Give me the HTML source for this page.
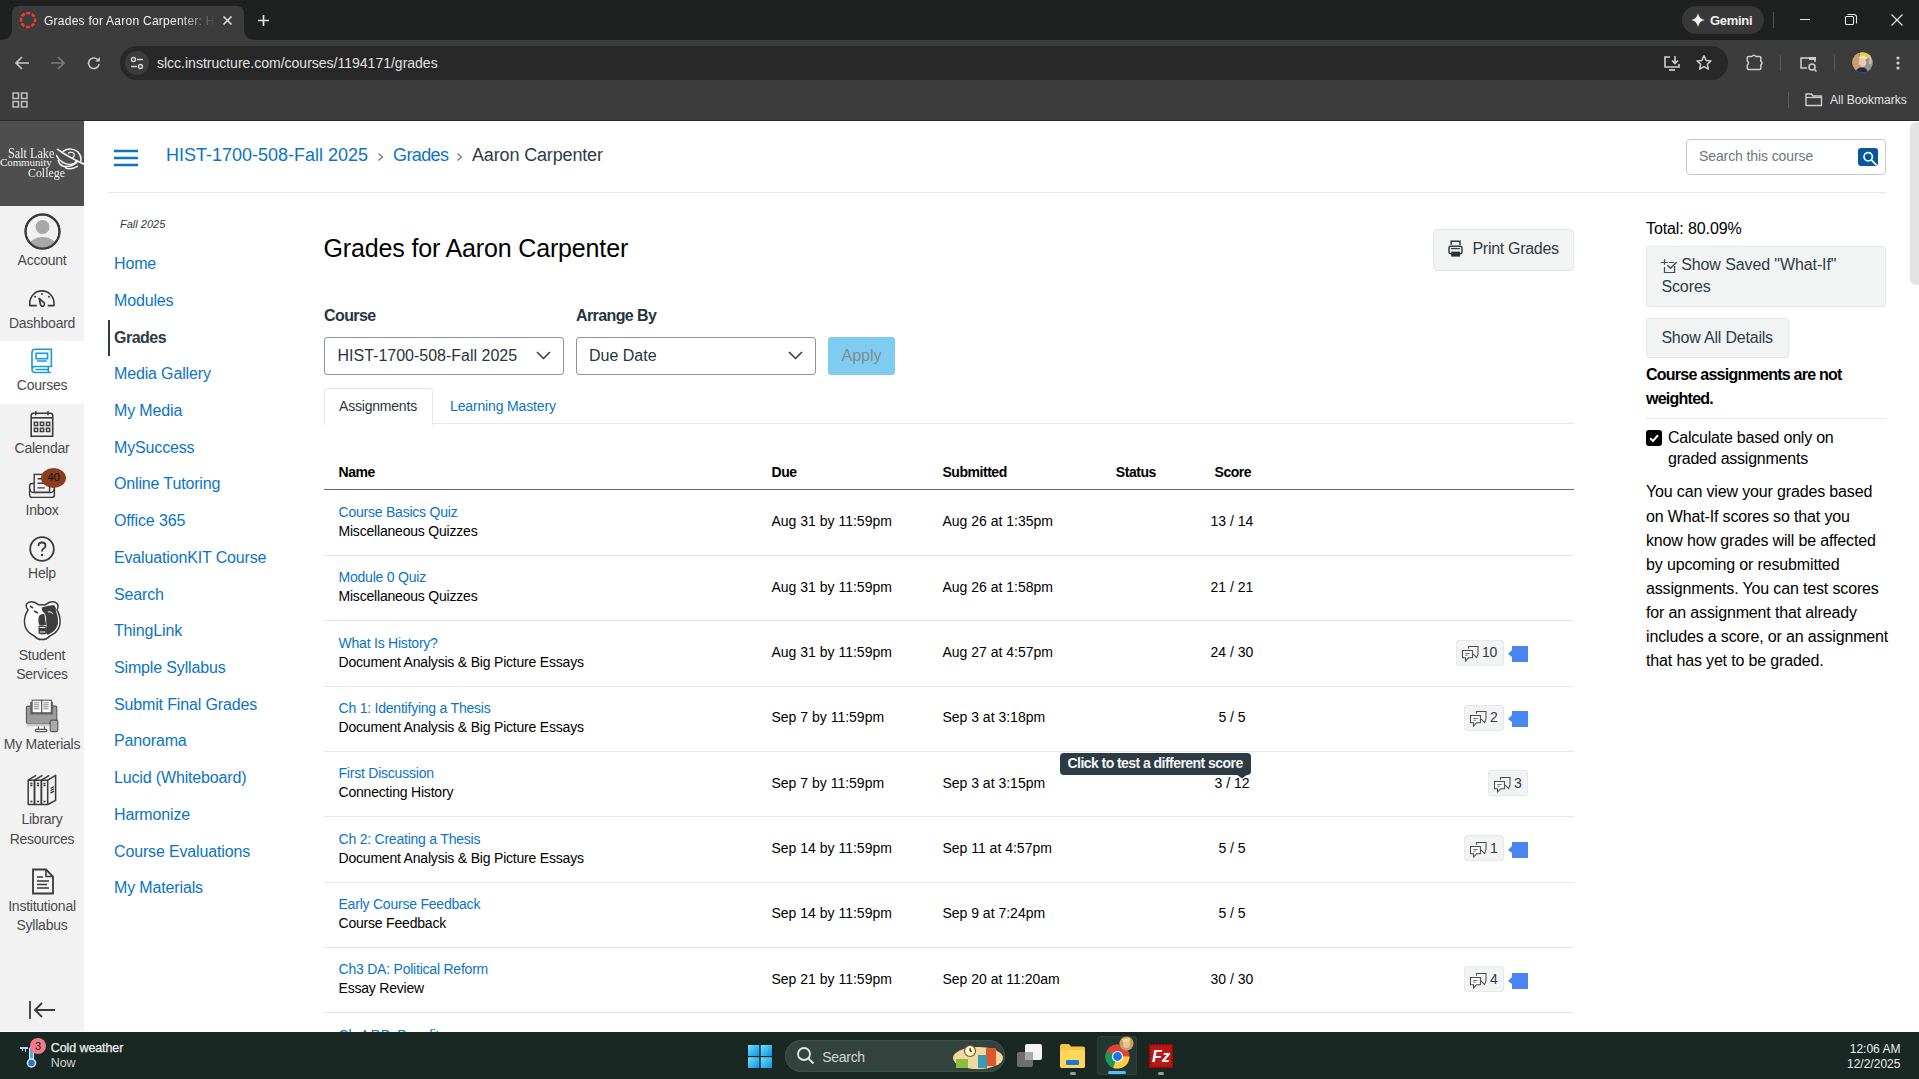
<!DOCTYPE html>
<html><head><meta charset="utf-8"><title>Grades</title>
<style>
html,body{margin:0;padding:0;}
body{width:1919px;height:1079px;overflow:hidden;position:relative;background:#fff;font-family:"Liberation Sans", sans-serif;}
.t{position:absolute;white-space:nowrap;}
.r{position:absolute;}
</style></head><body>
<div class="r" style="left:0px;top:0px;width:1919px;height:40px;background:#1f2121;"></div>
<div class="r" style="left:0px;top:40px;width:1919px;height:81px;background:#3c3c3c;"></div>
<svg class="r" style="left:0px;top:0px;" width="260" height="40" viewBox="0 0 260 40"><path d="M0 40 Q12 40 12 28 L12 14 Q12 6 20 6 L236 6 Q244 6 244 14 L244 28 Q244 40 256 40 Z" fill="#3c3c3c"/></svg>
<svg class="r" style="left:19px;top:11px;" width="18" height="18" viewBox="0 0 18 18"><circle cx="9" cy="9" r="7" fill="none" stroke="#f23d2e" stroke-width="2.6" stroke-dasharray="3.9 1.6" stroke-dashoffset="1.95"/></svg>
<div class="t" style="left:44px;top:14.34px;font-size:12px;line-height:15px;color:#f2f2f2;letter-spacing:0.25px;width:172px;overflow:hidden;-webkit-mask-image:linear-gradient(90deg,#000 78%,transparent);">Grades for Aaron Carpenter: HIS</div>
<svg class="r" style="left:222px;top:15px;" width="11" height="11" viewBox="0 0 11 11"><path d="M1.5 1.5 L9.5 9.5 M9.5 1.5 L1.5 9.5" stroke="#e3e3e3" stroke-width="1.6"/></svg>
<svg class="r" style="left:257px;top:14px;" width="13" height="13" viewBox="0 0 13 13"><path d="M6.5 1 V12 M1 6.5 H12" stroke="#e3e3e3" stroke-width="1.7"/></svg>
<div class="r" style="left:1682px;top:6px;width:82px;height:28px;background:#383838;border-radius:14px;"></div>
<svg class="r" style="left:1691px;top:13px;" width="14" height="14" viewBox="0 0 14 14"><path d="M7 0 Q8 6 14 7 Q8 8 7 14 Q6 8 0 7 Q6 6 7 0Z" fill="#f0f0f0"/></svg>
<div class="t" style="left:1710px;top:12.50px;font-size:13px;line-height:16px;color:#f0f0f0;font-weight:700;letter-spacing:-0.3px;">Gemini</div>
<div class="r" style="left:1773px;top:12px;width:1px;height:16px;background:#555;"></div>
<div class="r" style="left:1800px;top:19px;width:10px;height:1px;background:#e8e8e8;"></div>
<svg class="r" style="left:1845px;top:14px;" width="12" height="12" viewBox="0 0 12 12"><rect x="0.5" y="2.5" width="8" height="8" fill="none" stroke="#e8e8e8" stroke-width="1.1" rx="1"/><path d="M2.5 0.5 H9 Q11.5 0.5 11.5 3 V9.5" fill="none" stroke="#e8e8e8" stroke-width="1.1"/></svg>
<svg class="r" style="left:1891px;top:14px;" width="12" height="12" viewBox="0 0 12 12"><path d="M0.5 0.5 L11.5 11.5 M11.5 0.5 L0.5 11.5" stroke="#e8e8e8" stroke-width="1.2"/></svg>
<svg class="r" style="left:14px;top:55px;" width="16" height="16" viewBox="0 0 16 16"><path d="M15 8 H2 M8 2 L2 8 L8 14" fill="none" stroke="#c8c8c8" stroke-width="1.7"/></svg>
<svg class="r" style="left:50px;top:55px;" width="16" height="16" viewBox="0 0 16 16"><path d="M1 8 H14 M8 2 L14 8 L8 14" fill="none" stroke="#7a7a7a" stroke-width="1.7"/></svg>
<svg class="r" style="left:86px;top:54px;" width="16" height="16" viewBox="0 0 16 16"><path d="M13.1 10 A5.3 5.3 0 1 1 11.4 5.3" fill="none" stroke="#c8c8c8" stroke-width="1.6"/><path d="M9.2 7.4 H13.9 V2.9 Z" fill="#c8c8c8"/></svg>
<div class="r" style="left:120px;top:46px;width:1608px;height:34px;background:#282828;border-radius:17px;"></div>
<div class="r" style="left:125px;top:51px;width:24px;height:24px;background:#3c3c3c;border-radius:12px;"></div>
<svg class="r" style="left:129px;top:55px;" width="16" height="16" viewBox="0 0 16 16"><circle cx="4.5" cy="4.5" r="2" fill="none" stroke="#d8d8d8" stroke-width="1.4"/><path d="M8 4.5 H14" stroke="#d8d8d8" stroke-width="1.4"/><circle cx="11.5" cy="11.5" r="2" fill="none" stroke="#d8d8d8" stroke-width="1.4"/><path d="M2 11.5 H8" stroke="#d8d8d8" stroke-width="1.4"/></svg>
<div class="t" style="left:157px;top:54.15px;font-size:14px;line-height:18px;color:#e3e3e3;">slcc.instructure.com/courses/1194171/grades</div>
<svg class="r" style="left:1663px;top:55px;" width="19" height="17" viewBox="0 0 19 17"><path d="M7 2 H2 V12 H16 V9" fill="none" stroke="#cfcfcf" stroke-width="1.6"/><path d="M12 1 V8 M9 5.5 L12 8.5 L15 5.5" fill="none" stroke="#cfcfcf" stroke-width="1.6"/><path d="M6 15 H12" stroke="#cfcfcf" stroke-width="1.8"/></svg>
<svg class="r" style="left:1695px;top:54px;" width="18" height="18" viewBox="0 0 18 18"><path d="M9 1.8 L11.1 6.4 L16 6.9 L12.3 10.2 L13.4 15.2 L9 12.6 L4.6 15.2 L5.7 10.2 L2 6.9 L6.9 6.4 Z" fill="none" stroke="#cfcfcf" stroke-width="1.5" stroke-linejoin="round"/></svg>
<svg class="r" style="left:1745px;top:53px;" width="20" height="20" viewBox="0 0 20 20"><path d="M3.5 3.4 H6.9 Q8.9 0.9 10.9 3.4 H14.6 Q15.8 3.4 15.8 4.6 V8.2 Q18.3 10 15.8 11.8 V15.3 Q15.8 16.5 14.6 16.5 H3.5 Q2.3 16.5 2.3 15.3 V12 Q4.8 10 2.3 8 V4.6 Q2.3 3.4 3.5 3.4 Z" fill="none" stroke="#cfcfcf" stroke-width="1.5" stroke-linejoin="round"/></svg>
<div class="r" style="left:1780px;top:55px;width:1px;height:16px;background:#5a5a5a;"></div>
<svg class="r" style="left:1799px;top:55px;" width="20" height="18" viewBox="0 0 20 18"><path d="M8 13 H2 V3 H16 V7" fill="none" stroke="#cfcfcf" stroke-width="1.5"/><rect x="10" y="2" width="7" height="3" fill="#cfcfcf"/><circle cx="13" cy="12" r="3" fill="none" stroke="#cfcfcf" stroke-width="1.5"/><path d="M15 14 L17.5 16.5" stroke="#cfcfcf" stroke-width="1.6"/></svg>
<div class="r" style="left:1834px;top:55px;width:1px;height:16px;background:#5a5a5a;"></div>
<svg class="r" style="left:1852px;top:52px;" width="21" height="21" viewBox="0 0 21 21"><defs><clipPath id="av"><circle cx="10.5" cy="10.5" r="10.2"/></clipPath></defs><g clip-path="url(#av)"><rect width="21" height="21" fill="#b08a5a"/><rect x="0" y="0" width="7" height="21" fill="#c9a070"/><rect x="15" y="9" width="6" height="12" fill="#8a9aa0"/><path d="M8 0 L18 0 L18.5 6 L8 7 Z" fill="#e8d040"/><path d="M7 5 Q11 3.5 15 5.5 L14.5 7 L7.5 7 Z" fill="#f0eee0"/><ellipse cx="10.5" cy="10.5" rx="3.8" ry="4.6" fill="#e6c8b8"/><path d="M3 21 Q4 15.5 10.5 15.5 Q15 15.5 16 21 Z" fill="#1c2a55"/><path d="M16.5 3 Q19.5 6 18 12" stroke="#d8c8b0" stroke-width="2" fill="none"/></g></svg>
<svg class="r" style="left:1896px;top:56px;" width="4" height="14" viewBox="0 0 4 14"><circle cx="2" cy="2" r="1.6" fill="#d0d0d0"/><circle cx="2" cy="7" r="1.6" fill="#d0d0d0"/><circle cx="2" cy="12" r="1.6" fill="#d0d0d0"/></svg>
<svg class="r" style="left:12px;top:92px;" width="16" height="16" viewBox="0 0 16 16"><rect x="1" y="1" width="5.5" height="5.5" fill="none" stroke="#c8c8c8" stroke-width="1.4"/><rect x="9.5" y="1" width="5.5" height="5.5" fill="none" stroke="#c8c8c8" stroke-width="1.4"/><rect x="1" y="9.5" width="5.5" height="5.5" fill="none" stroke="#c8c8c8" stroke-width="1.4"/><rect x="9.5" y="9.5" width="5.5" height="5.5" fill="none" stroke="#c8c8c8" stroke-width="1.4"/></svg>
<div class="r" style="left:1788px;top:92px;width:1px;height:16px;background:#5a5a5a;"></div>
<svg class="r" style="left:1805px;top:93px;" width="18" height="14" viewBox="0 0 18 14"><path d="M1 1 H6.5 L8 3 H16.5 V12.5 H1 Z" fill="none" stroke="#cfcfcf" stroke-width="1.4" stroke-linejoin="round"/><path d="M1 4.5 H16.5" stroke="#cfcfcf" stroke-width="1.2"/></svg>
<div class="t" style="left:1830px;top:93.34px;font-size:12px;line-height:15px;color:#e3e3e3;">All Bookmarks</div>
<div class="r" style="left:0px;top:120px;width:1919px;height:1px;background:#2a2a2a;"></div>
<div class="r" style="left:0px;top:121px;width:84px;height:910px;background:#f2f2f2;"></div>
<div class="r" style="left:0px;top:121px;width:84px;height:85px;background:#4e4e4e;"></div>
<div class="r" style="left:0px;top:341px;width:84px;height:63px;background:#ffffff;"></div>
<div class="t" style="left:8px;top:143.78px;font-size:14.5px;line-height:18px;color:#f4f4f4;font-family:'Liberation Serif', serif;"><span style="display:inline-block;transform:scaleX(0.84);transform-origin:0 0">Salt Lake</span></div>
<div class="t" style="left:0px;top:154.99px;font-size:11px;line-height:14px;color:#f4f4f4;letter-spacing:-0.1px;font-family:'Liberation Serif', serif;"><span style="display:inline-block;transform:scaleX(1.0);transform-origin:0 0">Community</span></div>
<div class="t" style="left:27.5px;top:163.62px;font-size:13.5px;line-height:17px;color:#f4f4f4;font-family:'Liberation Serif', serif;"><span style="display:inline-block;transform:scaleX(0.88);transform-origin:0 0">College</span></div>
<svg class="r" style="left:56px;top:147px;" width="28" height="24" viewBox="0 0 28 24"><g fill="none" stroke="#f4f4f4" stroke-linecap="round"><path d="M7 4.3 Q14 -0.5 21.5 4.5 Q26 9 24.7 14" stroke-width="1.5"/><path d="M1.7 2.4 Q12 10 27.5 16.9" stroke-width="1.8"/><path d="M0.5 8.5 Q5 17 14.4 17.5 Q19 17 21 14" stroke-width="1.5"/><path d="M2.2 13.5 Q4 19.5 10 19.5 Q16 19.5 20.9 15.5" stroke-width="1.5"/><path d="M9.2 20.7 Q14 23.5 21.4 19.3" stroke-width="1.5"/><path d="M12.5 6 Q15 4 18 6.5 Q19 9 16.5 11" stroke-width="1.2"/></g></svg>
<svg class="r" style="left:24px;top:213px;" width="37" height="37" viewBox="0 0 37 37"><defs><clipPath id="ac"><circle cx="18.5" cy="18.5" r="16.5"/></clipPath></defs><circle cx="18.5" cy="18.5" r="17" fill="#f1f1f1" stroke="#3a3a3a" stroke-width="2"/><g clip-path="url(#ac)"><circle cx="18.5" cy="14" r="7" fill="#a8a8a8"/><ellipse cx="18.5" cy="34" rx="14" ry="10" fill="#a8a8a8"/></g><circle cx="18.5" cy="18.5" r="17" fill="none" stroke="#3a3a3a" stroke-width="2"/></svg>
<div class="t" style="left:-258px;width:600px;text-align:center;top:251.15px;font-size:14px;line-height:18px;color:#4a4a4a;letter-spacing:-0.25px;">Account</div>
<svg class="r" style="left:28px;top:288px;" width="28" height="20" viewBox="0 0 28 20"><g fill="none" stroke="#3a3a3a" stroke-width="1.6" stroke-linejoin="round"><path d="M8.8 17.6 H1.8 V15 A12.1 12.1 0 0 1 26 15 V17.6 H19.7"/><path d="M11.1 10.3 L12.7 17.2 Q13.6 18.8 15.3 18.3 Q17 17.3 16.4 15.2 Z"/></g><circle cx="14" cy="5.9" r="1" fill="#3a3a3a"/><circle cx="7.1" cy="8.7" r="1" fill="#3a3a3a"/><circle cx="21" cy="8.7" r="1" fill="#3a3a3a"/></svg>
<div class="t" style="left:-258px;width:600px;text-align:center;top:314.15px;font-size:14px;line-height:18px;color:#4a4a4a;letter-spacing:-0.25px;">Dashboard</div>
<svg class="r" style="left:31px;top:348px;" width="22" height="26" viewBox="0 0 22 26"><g fill="none" stroke="#1a9ad6" stroke-width="1.6"><path d="M1 20 V4.5 Q1 1.2 4.3 1.2 H20.4 V18.5 H4 Q1 18.5 1 21.5 Q1 24.5 4.5 24.5 H19.8"/><path d="M17.3 18.5 V24.5"/><rect x="5.1" y="5.3" width="11.5" height="5.4"/><path d="M6.1 13 H15.7 M4.5 21.5 H17.3"/></g></svg>
<div class="t" style="left:-258px;width:600px;text-align:center;top:376.15px;font-size:14px;line-height:18px;color:#4a4a4a;letter-spacing:-0.25px;">Courses</div>
<svg class="r" style="left:29px;top:410px;" width="26" height="28" viewBox="0 0 26 28"><g fill="none" stroke="#3a3a3a" stroke-width="1.6"><path d="M2.2 26.2 V5.5 Q2.2 3.2 4.5 3.2 H21.4 Q23.7 3.2 23.7 5.5 V26.2 Z"/><path d="M2.2 7.8 H23.7"/><path d="M6.8 1.3 V5.2 M19 1.3 V5.2"/></g><g fill="#cfcfcf" stroke="#3a3a3a" stroke-width="1.3"><rect x="5.3" y="12.2" width="3.4" height="3.4"/><rect x="11.3" y="12.2" width="3.4" height="3.4"/><rect x="17.4" y="12.2" width="3.4" height="3.4"/><rect x="5.3" y="18.2" width="3.4" height="3.4"/><rect x="11.3" y="18.2" width="3.4" height="3.4"/><rect x="17.4" y="18.2" width="3.4" height="3.4"/></g></svg>
<div class="t" style="left:-258px;width:600px;text-align:center;top:439.15px;font-size:14px;line-height:18px;color:#4a4a4a;letter-spacing:-0.25px;">Calendar</div>
<svg class="r" style="left:28px;top:472px;" width="28" height="27" viewBox="0 0 28 27"><g fill="none" stroke="#3a3a3a" stroke-width="1.4"><rect x="1.6" y="11.5" width="24.8" height="13.9" rx="2.5"/><path d="M1.6 16.5 Q2.3 20.6 6 20.6 H22 Q25.7 20.6 26.4 16.5"/></g><rect x="6.2" y="2.4" width="15.4" height="17.8" fill="#f1f1f1" stroke="#3a3a3a" stroke-width="1.4"/><path d="M9.6 6.8 H16.6 M9.6 11.3 H16.6 M9.6 15.9 H16.6" stroke="#3a3a3a" stroke-width="1.4"/></svg>
<div class="r" style="left:41px;top:468px;width:25px;height:20px;background:#8a3e1e;border-radius:50%;"></div>
<div class="t" style="left:-246.3px;width:600px;text-align:center;top:470.19px;font-size:11px;line-height:14px;color:#111;">40</div>
<div class="t" style="left:-258px;width:600px;text-align:center;top:501.15px;font-size:14px;line-height:18px;color:#4a4a4a;letter-spacing:-0.25px;">Inbox</div>
<svg class="r" style="left:29px;top:536px;" width="26" height="26" viewBox="0 0 26 26"><circle cx="13" cy="13" r="11.8" fill="none" stroke="#3a3a3a" stroke-width="1.8"/><path d="M9.5 10 Q9.5 6.5 13 6.5 Q16.5 6.5 16.5 9.7 Q16.5 11.8 13.8 13.2 Q13 13.7 13 15.5" fill="none" stroke="#3a3a3a" stroke-width="1.8"/><circle cx="13" cy="19" r="1.2" fill="#3a3a3a"/></svg>
<div class="t" style="left:-258px;width:600px;text-align:center;top:564.15px;font-size:14px;line-height:18px;color:#4a4a4a;letter-spacing:-0.25px;">Help</div>
<svg class="r" style="left:20px;top:598px;" width="44" height="46" viewBox="0 0 44 46"><path d="M8 12 Q5 8 7 5.5 Q10 2.5 15 4.5 L19 7 Q22 6.3 25 7 L29 4.5 Q34 2.5 37 5.5 Q39 8 37 12 Q40.5 18 40 25 Q39.5 31 35 35 L29 38.5 Q27 41.5 22 41.5 Q17 41.5 15 38.5 L9.5 35 Q5 31 4.5 25 Q4 18 8 12 Z" fill="#fbfbfb" stroke="#3a3a3a" stroke-width="1.5"/><path d="M21.5 9.5 Q27 7.5 33.5 7 Q36.5 8.5 35.8 12.5 Q38.5 18.5 38 25.5 Q37 31 32 34.5 L27.5 37 Q25.5 33 26.5 28 L26 19 Q25 14.5 22.5 13.5 Z" fill="#3d3d3d"/><path d="M19 18 Q21.5 15 24.5 16.5 L26 27 L19.5 27.5 Q17.5 22.5 19 18 Z" fill="#3d3d3d"/><path d="M18.5 28 Q22.5 27 26.5 28.5 L27 35.5 Q22.5 37.5 18.5 35.5 Z" fill="#3d3d3d"/><path d="M19.5 29.5 H25.5 M19.8 34 H25.3" stroke="#fff" stroke-width="1.2"/><path d="M14 13 L18 15 M10 8 L13 10" stroke="#3d3d3d" stroke-width="1.6"/><path d="M28 14 Q31 13 33 16" stroke="#fff" stroke-width="1.1" fill="none"/></svg>
<div class="t" style="left:-258px;width:600px;text-align:center;top:646.15px;font-size:14px;line-height:18px;color:#4a4a4a;letter-spacing:-0.25px;">Student</div>
<div class="t" style="left:-258px;width:600px;text-align:center;top:665.15px;font-size:14px;line-height:18px;color:#4a4a4a;letter-spacing:-0.25px;">Services</div>
<svg class="r" style="left:24px;top:698px;" width="36" height="36" viewBox="0 0 36 36"><rect x="2.4" y="8.1" width="30.4" height="17.5" rx="1.5" fill="#9c9c9c" stroke="#555" stroke-width="1.1"/><rect x="3" y="25.6" width="22" height="2.6" fill="#c8c8c8"/><path d="M14.5 28.3 V31.4 M20.4 28.3 V31.4" stroke="#555" stroke-width="1.1"/><rect x="11.2" y="31.4" width="11.7" height="2.2" rx="1" fill="#f1f1f1" stroke="#555" stroke-width="1.1"/><path d="M6.1 4 H29.1 V16.6 H6.1Z" fill="#6a6a6a"/><rect x="8.1" y="2.2" width="9.6" height="12.6" fill="#fff" stroke="#555" stroke-width="1.1"/><rect x="17.7" y="2.2" width="9.6" height="12.6" fill="#fff" stroke="#555" stroke-width="1.1"/><path d="M9.8 4.8 H15.3 M9.8 6.8 H15.3 M9.8 8.8 H15.3 M9.8 10.8 H15.3 M19.3 4.8 H24.8 M19.3 6.8 H24.8 M19.3 8.8 H24.8 M19.3 10.8 H24.8" stroke="#666" stroke-width="0.8"/><rect x="26.2" y="22.1" width="7.6" height="11.5" rx="1.5" fill="#aaa" stroke="#555" stroke-width="1.1"/></svg>
<div class="t" style="left:-258px;width:600px;text-align:center;top:735.15px;font-size:14px;line-height:18px;color:#4a4a4a;letter-spacing:-0.25px;">My Materials</div>
<svg class="r" style="left:26px;top:773px;" width="32" height="34" viewBox="0 0 32 34"><g fill="none" stroke="#3a3a3a" stroke-width="1.5" stroke-linejoin="round"><rect x="2.2" y="7.2" width="6.3" height="24.3"/><rect x="8.5" y="7.2" width="6.9" height="24.3"/><rect x="15.4" y="7.2" width="6.3" height="24.3"/><path d="M2.2 7.2 L10.1 2.3 M8.5 7.2 L16.4 2.3 M15.4 7.2 L23.3 2.3 M21.7 7.2 L29.6 2.3 V27.3 L21.7 31.5"/><path d="M4.3 10.5 H6.4 M4.3 12.5 H6.4 M4.3 28.5 H6.4 M10.9 10.5 H13.1 M10.9 12.5 H13.1 M10.9 28.5 H13.1 M17.5 10.5 H19.6 M17.5 12.5 H19.6 M17.5 28.5 H19.6 M24.5 15.5 L28 13.5 M24.5 17.8 L28 15.8 M24.5 20.1 L28 18.1" stroke-width="1.3"/></g></svg>
<div class="t" style="left:-258px;width:600px;text-align:center;top:810.15px;font-size:14px;line-height:18px;color:#4a4a4a;letter-spacing:-0.25px;">Library</div>
<div class="t" style="left:-258px;width:600px;text-align:center;top:830.15px;font-size:14px;line-height:18px;color:#4a4a4a;letter-spacing:-0.25px;">Resources</div>
<svg class="r" style="left:31px;top:868px;" width="24" height="27" viewBox="0 0 24 27"><path d="M2 1.5 H15 L22 8.5 V25.5 H2Z" fill="#f6f6f6" stroke="#3a3a3a" stroke-width="1.8"/><path d="M15 1.5 V8.5 H22" fill="none" stroke="#3a3a3a" stroke-width="1.6"/><path d="M6 9 H12 M6 13 H18 M6 16.5 H16 M6 20 H18" stroke="#3a3a3a" stroke-width="1.6"/></svg>
<div class="t" style="left:-258px;width:600px;text-align:center;top:897.15px;font-size:14px;line-height:18px;color:#4a4a4a;letter-spacing:-0.25px;">Institutional</div>
<div class="t" style="left:-258px;width:600px;text-align:center;top:916.15px;font-size:14px;line-height:18px;color:#4a4a4a;letter-spacing:-0.25px;">Syllabus</div>
<svg class="r" style="left:28px;top:1000px;" width="28" height="20" viewBox="0 0 28 20"><path d="M2 1 V19" stroke="#3a3a3a" stroke-width="1.8"/><path d="M27 10 H7 M14 3 L7 10 L14 17" fill="none" stroke="#3a3a3a" stroke-width="1.8"/></svg>
<div class="t" style="left:120px;top:216.69px;font-size:11px;line-height:14px;color:#2d3b45;font-style:italic;">Fall 2025</div>
<div class="t" style="left:114px;top:254.06px;font-size:16px;line-height:20px;color:#0b74c4;letter-spacing:-0.15px;">Home</div>
<div class="t" style="left:114px;top:290.78px;font-size:16px;line-height:20px;color:#0b74c4;letter-spacing:-0.15px;">Modules</div>
<div class="t" style="left:114px;top:327.50px;font-size:16px;line-height:20px;color:#2d3b45;font-weight:700;letter-spacing:-0.5px;">Grades</div>
<div class="t" style="left:114px;top:364.22px;font-size:16px;line-height:20px;color:#0b74c4;letter-spacing:-0.15px;">Media Gallery</div>
<div class="t" style="left:114px;top:400.94px;font-size:16px;line-height:20px;color:#0b74c4;letter-spacing:-0.15px;">My Media</div>
<div class="t" style="left:114px;top:437.66px;font-size:16px;line-height:20px;color:#0b74c4;letter-spacing:-0.15px;">MySuccess</div>
<div class="t" style="left:114px;top:474.38px;font-size:16px;line-height:20px;color:#0b74c4;letter-spacing:-0.15px;">Online Tutoring</div>
<div class="t" style="left:114px;top:511.10px;font-size:16px;line-height:20px;color:#0b74c4;letter-spacing:-0.15px;">Office 365</div>
<div class="t" style="left:114px;top:547.82px;font-size:16px;line-height:20px;color:#0b74c4;letter-spacing:-0.15px;">EvaluationKIT Course</div>
<div class="t" style="left:114px;top:584.54px;font-size:16px;line-height:20px;color:#0b74c4;letter-spacing:-0.15px;">Search</div>
<div class="t" style="left:114px;top:621.26px;font-size:16px;line-height:20px;color:#0b74c4;letter-spacing:-0.15px;">ThingLink</div>
<div class="t" style="left:114px;top:657.98px;font-size:16px;line-height:20px;color:#0b74c4;letter-spacing:-0.15px;">Simple Syllabus</div>
<div class="t" style="left:114px;top:694.70px;font-size:16px;line-height:20px;color:#0b74c4;letter-spacing:-0.15px;">Submit Final Grades</div>
<div class="t" style="left:114px;top:731.42px;font-size:16px;line-height:20px;color:#0b74c4;letter-spacing:-0.15px;">Panorama</div>
<div class="t" style="left:114px;top:768.14px;font-size:16px;line-height:20px;color:#0b74c4;letter-spacing:-0.15px;">Lucid (Whiteboard)</div>
<div class="t" style="left:114px;top:804.86px;font-size:16px;line-height:20px;color:#0b74c4;letter-spacing:-0.15px;">Harmonize</div>
<div class="t" style="left:114px;top:841.58px;font-size:16px;line-height:20px;color:#0b74c4;letter-spacing:-0.15px;">Course Evaluations</div>
<div class="t" style="left:114px;top:878.30px;font-size:16px;line-height:20px;color:#0b74c4;letter-spacing:-0.15px;">My Materials</div>
<div class="r" style="left:108px;top:319.5px;width:2px;height:36.5px;background:#2d3b45;"></div>
<svg class="r" style="left:114px;top:149px;" width="24" height="18" viewBox="0 0 24 18"><path d="M0 2 H24 M0 9 H24 M0 16 H24" stroke="#0b74c4" stroke-width="2.6"/></svg>
<div class="t" style="left:166px;top:143.76px;font-size:18px;line-height:22px;color:#0b74c4;">HIST-1700-508-Fall 2025</div>
<svg class="r" style="left:377px;top:152px;" width="7" height="10" viewBox="0 0 7 10"><path d="M1.5 1.5 L5.5 5 L1.5 8.5" fill="none" stroke="#6b7780" stroke-width="1.2"/></svg>
<div class="t" style="left:393px;top:143.76px;font-size:18px;line-height:22px;color:#0b74c4;letter-spacing:-0.6px;">Grades</div>
<svg class="r" style="left:456px;top:152px;" width="7" height="10" viewBox="0 0 7 10"><path d="M1.5 1.5 L5.5 5 L1.5 8.5" fill="none" stroke="#6b7780" stroke-width="1.2"/></svg>
<div class="t" style="left:472px;top:143.76px;font-size:18px;line-height:22px;color:#2d3b45;letter-spacing:-0.15px;">Aaron Carpenter</div>
<div class="r" style="left:108px;top:192px;width:1778px;height:1px;background:#e4e7e9;"></div>
<div class="r" style="left:1686px;top:139px;width:198px;height:34px;background:#fff;border:1px solid #c9c9c9;border-radius:4px;"></div>
<div class="t" style="left:1699px;top:146.65px;font-size:14px;line-height:18px;color:#6b7780;letter-spacing:-0.1px;">Search this course</div>
<div class="r" style="left:1858px;top:148px;width:20px;height:18px;background:#0756a0;border-radius:3px;overflow:hidden;"></div>
<svg class="r" style="left:1858px;top:148px;" width="20" height="18" viewBox="0 0 20 18"><circle cx="10.2" cy="8.8" r="4.2" fill="none" stroke="#fff" stroke-width="1.7"/><path d="M13 11.7 L18.5 17.2" stroke="#fff" stroke-width="1.8"/></svg>
<div class="r" style="left:1910px;top:122px;width:12px;height:163px;background:#e3e3e3;border-radius:6px;"></div>
<div class="t" style="left:323.5px;top:233.14px;font-size:25px;line-height:31px;color:#000;letter-spacing:-0.15px;">Grades for Aaron Carpenter</div>
<div class="r" style="left:1433px;top:229px;width:139px;height:40px;background:#f2f4f4;border:1px solid #e4e7e9;border-radius:4px;"></div>
<svg class="r" style="left:1447px;top:240px;" width="17" height="18" viewBox="0 0 17 18"><path d="M4.2 5 V1.3 H13 V5" fill="none" stroke="#2d3b45" stroke-width="1.5"/><rect x="2" y="6.2" width="13" height="7.5" rx="1.6" fill="none" stroke="#2d3b45" stroke-width="1.5"/><path d="M4 8.6 H13" stroke="#2d3b45" stroke-width="1.3"/><rect x="4.2" y="11.6" width="8.8" height="5" fill="#263238"/></svg>
<div class="t" style="left:1472.5px;top:239.46px;font-size:16px;line-height:20px;color:#2d3b45;letter-spacing:-0.3px;">Print Grades</div>
<div class="t" style="left:324px;top:305.76px;font-size:16px;line-height:20px;color:#273540;font-weight:700;letter-spacing:-0.6px;">Course</div>
<div class="t" style="left:576px;top:305.76px;font-size:16px;line-height:20px;color:#273540;font-weight:700;letter-spacing:-0.6px;">Arrange By</div>
<div class="r" style="left:324px;top:337px;width:238px;height:36px;background:#fff;border:1px solid #8b969e;border-radius:3px;"></div>
<div class="t" style="left:337.5px;top:345.76px;font-size:16px;line-height:20px;color:#273540;letter-spacing:0px;">HIST-1700-508-Fall 2025</div>
<svg class="r" style="left:536px;top:351px;" width="15" height="9" viewBox="0 0 15 9"><path d="M1 1 L7.5 7.5 L14 1" fill="none" stroke="#2d3b45" stroke-width="1.5"/></svg>
<div class="r" style="left:576px;top:337px;width:238px;height:36px;background:#fff;border:1px solid #8b969e;border-radius:3px;"></div>
<div class="t" style="left:589px;top:345.76px;font-size:16px;line-height:20px;color:#273540;letter-spacing:0px;">Due Date</div>
<svg class="r" style="left:788px;top:351px;" width="15" height="9" viewBox="0 0 15 9"><path d="M1 1 L7.5 7.5 L14 1" fill="none" stroke="#2d3b45" stroke-width="1.5"/></svg>
<div class="r" style="left:828px;top:337px;width:67px;height:38px;background:#7ecdf0;border-radius:3px;"></div>
<div class="t" style="left:561.5px;width:600px;text-align:center;top:345.76px;font-size:16px;line-height:20px;color:#7f8a92;">Apply</div>
<div class="r" style="left:324px;top:423px;width:1250px;height:1px;background:#e4e7e9;"></div>
<div class="r" style="left:324px;top:388px;width:107px;height:36px;background:#fff;border:1px solid #e4e7e9;border-bottom:none;border-radius:3px 3px 0 0;"></div>
<div class="t" style="left:339px;top:396.85px;font-size:14px;line-height:18px;color:#273540;letter-spacing:-0.2px;">Assignments</div>
<div class="t" style="left:450px;top:396.85px;font-size:14px;line-height:18px;color:#0b74c4;letter-spacing:-0.15px;">Learning Mastery</div>
<div class="t" style="left:338.5px;top:463.25px;font-size:14px;line-height:18px;color:#000;font-weight:700;letter-spacing:-0.45px;">Name</div>
<div class="t" style="left:771.5px;top:463.25px;font-size:14px;line-height:18px;color:#000;font-weight:700;letter-spacing:-0.45px;">Due</div>
<div class="t" style="left:942.4px;top:463.25px;font-size:14px;line-height:18px;color:#000;font-weight:700;letter-spacing:-0.45px;">Submitted</div>
<div class="t" style="left:1115.8px;top:463.25px;font-size:14px;line-height:18px;color:#000;font-weight:700;letter-spacing:-0.45px;">Status</div>
<div class="t" style="left:1214.5px;top:463.25px;font-size:14px;line-height:18px;color:#000;font-weight:700;letter-spacing:-0.45px;">Score</div>
<div class="r" style="left:324px;top:489px;width:1250px;height:1px;background:#5f6b74;"></div>
<div class="t" style="left:338.5px;top:503.15px;font-size:14px;line-height:18px;color:#0b74c4;letter-spacing:-0.22px;">Course Basics Quiz</div>
<div class="t" style="left:338.5px;top:522.05px;font-size:14px;line-height:18px;color:#000;letter-spacing:-0.2px;">Miscellaneous Quizzes</div>
<div class="t" style="left:771.5px;top:512.45px;font-size:14px;line-height:18px;color:#000;letter-spacing:0px;">Aug 31 by 11:59pm</div>
<div class="t" style="left:942.4px;top:512.45px;font-size:14px;line-height:18px;color:#000;letter-spacing:0px;">Aug 26 at 1:35pm</div>
<div class="t" style="left:932px;width:600px;text-align:center;top:512.45px;font-size:14px;line-height:18px;color:#000;letter-spacing:0px;">13 / 14</div>
<div class="r" style="left:324px;top:555.0px;width:1250px;height:1px;background:#e4e7e9;"></div>
<div class="t" style="left:338.5px;top:568.45px;font-size:14px;line-height:18px;color:#0b74c4;letter-spacing:-0.22px;">Module 0 Quiz</div>
<div class="t" style="left:338.5px;top:587.35px;font-size:14px;line-height:18px;color:#000;letter-spacing:-0.2px;">Miscellaneous Quizzes</div>
<div class="t" style="left:771.5px;top:577.75px;font-size:14px;line-height:18px;color:#000;letter-spacing:0px;">Aug 31 by 11:59pm</div>
<div class="t" style="left:942.4px;top:577.75px;font-size:14px;line-height:18px;color:#000;letter-spacing:0px;">Aug 26 at 1:58pm</div>
<div class="t" style="left:932px;width:600px;text-align:center;top:577.75px;font-size:14px;line-height:18px;color:#000;letter-spacing:0px;">21 / 21</div>
<div class="r" style="left:324px;top:620.3px;width:1250px;height:1px;background:#e4e7e9;"></div>
<div class="t" style="left:338.5px;top:633.75px;font-size:14px;line-height:18px;color:#0b74c4;letter-spacing:-0.22px;">What Is History?</div>
<div class="t" style="left:338.5px;top:652.65px;font-size:14px;line-height:18px;color:#000;letter-spacing:-0.2px;">Document Analysis &amp; Big Picture Essays</div>
<div class="t" style="left:771.5px;top:643.05px;font-size:14px;line-height:18px;color:#000;letter-spacing:0px;">Aug 31 by 11:59pm</div>
<div class="t" style="left:942.4px;top:643.05px;font-size:14px;line-height:18px;color:#000;letter-spacing:0px;">Aug 27 at 4:57pm</div>
<div class="t" style="left:932px;width:600px;text-align:center;top:643.05px;font-size:14px;line-height:18px;color:#000;letter-spacing:0px;">24 / 30</div>
<div class="r" style="left:324px;top:685.6px;width:1250px;height:1px;background:#e4e7e9;"></div>
<div class="r" style="left:1456px;top:639.5px;width:48px;height:26px;background:#f2f4f4;border:1px solid #e6e8ea;border-radius:3px;box-sizing:border-box;"></div>
<svg class="r" style="left:1461px;top:645.0px;" width="19" height="17" viewBox="0 0 19 17"><g fill="none" stroke="#4a4a4a" stroke-width="1.05" stroke-linejoin="miter"><path d="M7.5 3.7 V1.5 H17 V8.9 L15.5 12.6 L12 8.9"/><path d="M1.5 5.4 H11.4 V12.8 H7.5 L4.5 16 V12.8 H1.5 Z" fill="#fff"/><path d="M4.2 8.4 H8.8 M4.2 10.3 H6.7" stroke="#777"/></g></svg>
<div class="t" style="left:1482px;top:643.15px;font-size:14px;line-height:18px;color:#2d3b45;letter-spacing:-0.2px;">10</div>
<svg class="r" style="left:1507px;top:646.0px;" width="21" height="16" viewBox="0 0 21 16"><path d="M5 0 H21 V16 H5 V11 L1 8 L5 4 Z" fill="#4a86f2"/></svg>
<div class="t" style="left:338.5px;top:699.05px;font-size:14px;line-height:18px;color:#0b74c4;letter-spacing:-0.22px;">Ch 1: Identifying a Thesis</div>
<div class="t" style="left:338.5px;top:717.95px;font-size:14px;line-height:18px;color:#000;letter-spacing:-0.2px;">Document Analysis &amp; Big Picture Essays</div>
<div class="t" style="left:771.5px;top:708.35px;font-size:14px;line-height:18px;color:#000;letter-spacing:0px;">Sep 7 by 11:59pm</div>
<div class="t" style="left:942.4px;top:708.35px;font-size:14px;line-height:18px;color:#000;letter-spacing:0px;">Sep 3 at 3:18pm</div>
<div class="t" style="left:932px;width:600px;text-align:center;top:708.35px;font-size:14px;line-height:18px;color:#000;letter-spacing:0px;">5 / 5</div>
<div class="r" style="left:324px;top:750.9px;width:1250px;height:1px;background:#e4e7e9;"></div>
<div class="r" style="left:1464px;top:704.8px;width:40px;height:26px;background:#f2f4f4;border:1px solid #e6e8ea;border-radius:3px;box-sizing:border-box;"></div>
<svg class="r" style="left:1469px;top:710.3px;" width="19" height="17" viewBox="0 0 19 17"><g fill="none" stroke="#4a4a4a" stroke-width="1.05" stroke-linejoin="miter"><path d="M7.5 3.7 V1.5 H17 V8.9 L15.5 12.6 L12 8.9"/><path d="M1.5 5.4 H11.4 V12.8 H7.5 L4.5 16 V12.8 H1.5 Z" fill="#fff"/><path d="M4.2 8.4 H8.8 M4.2 10.3 H6.7" stroke="#777"/></g></svg>
<div class="t" style="left:1490px;top:708.45px;font-size:14px;line-height:18px;color:#2d3b45;letter-spacing:-0.2px;">2</div>
<svg class="r" style="left:1507px;top:711.3px;" width="21" height="16" viewBox="0 0 21 16"><path d="M5 0 H21 V16 H5 V11 L1 8 L5 4 Z" fill="#4a86f2"/></svg>
<div class="t" style="left:338.5px;top:764.35px;font-size:14px;line-height:18px;color:#0b74c4;letter-spacing:-0.22px;">First Discussion</div>
<div class="t" style="left:338.5px;top:783.25px;font-size:14px;line-height:18px;color:#000;letter-spacing:-0.2px;">Connecting History</div>
<div class="t" style="left:771.5px;top:773.65px;font-size:14px;line-height:18px;color:#000;letter-spacing:0px;">Sep 7 by 11:59pm</div>
<div class="t" style="left:942.4px;top:773.65px;font-size:14px;line-height:18px;color:#000;letter-spacing:0px;">Sep 3 at 3:15pm</div>
<div class="t" style="left:932px;width:600px;text-align:center;top:773.65px;font-size:14px;line-height:18px;color:#000;letter-spacing:0px;">3 / 12</div>
<div class="r" style="left:324px;top:816.2px;width:1250px;height:1px;background:#e4e7e9;"></div>
<div class="r" style="left:1488px;top:770.0999999999999px;width:40px;height:26px;background:#f2f4f4;border:1px solid #e6e8ea;border-radius:3px;box-sizing:border-box;"></div>
<svg class="r" style="left:1493px;top:775.5999999999999px;" width="19" height="17" viewBox="0 0 19 17"><g fill="none" stroke="#4a4a4a" stroke-width="1.05" stroke-linejoin="miter"><path d="M7.5 3.7 V1.5 H17 V8.9 L15.5 12.6 L12 8.9"/><path d="M1.5 5.4 H11.4 V12.8 H7.5 L4.5 16 V12.8 H1.5 Z" fill="#fff"/><path d="M4.2 8.4 H8.8 M4.2 10.3 H6.7" stroke="#777"/></g></svg>
<div class="t" style="left:1514px;top:773.75px;font-size:14px;line-height:18px;color:#2d3b45;letter-spacing:-0.2px;">3</div>
<div class="t" style="left:338.5px;top:829.65px;font-size:14px;line-height:18px;color:#0b74c4;letter-spacing:-0.22px;">Ch 2: Creating a Thesis</div>
<div class="t" style="left:338.5px;top:848.55px;font-size:14px;line-height:18px;color:#000;letter-spacing:-0.2px;">Document Analysis &amp; Big Picture Essays</div>
<div class="t" style="left:771.5px;top:838.95px;font-size:14px;line-height:18px;color:#000;letter-spacing:0px;">Sep 14 by 11:59pm</div>
<div class="t" style="left:942.4px;top:838.95px;font-size:14px;line-height:18px;color:#000;letter-spacing:0px;">Sep 11 at 4:57pm</div>
<div class="t" style="left:932px;width:600px;text-align:center;top:838.95px;font-size:14px;line-height:18px;color:#000;letter-spacing:0px;">5 / 5</div>
<div class="r" style="left:324px;top:881.5px;width:1250px;height:1px;background:#e4e7e9;"></div>
<div class="r" style="left:1464px;top:835.4px;width:40px;height:26px;background:#f2f4f4;border:1px solid #e6e8ea;border-radius:3px;box-sizing:border-box;"></div>
<svg class="r" style="left:1469px;top:840.9px;" width="19" height="17" viewBox="0 0 19 17"><g fill="none" stroke="#4a4a4a" stroke-width="1.05" stroke-linejoin="miter"><path d="M7.5 3.7 V1.5 H17 V8.9 L15.5 12.6 L12 8.9"/><path d="M1.5 5.4 H11.4 V12.8 H7.5 L4.5 16 V12.8 H1.5 Z" fill="#fff"/><path d="M4.2 8.4 H8.8 M4.2 10.3 H6.7" stroke="#777"/></g></svg>
<div class="t" style="left:1490px;top:839.05px;font-size:14px;line-height:18px;color:#2d3b45;letter-spacing:-0.2px;">1</div>
<svg class="r" style="left:1507px;top:841.9px;" width="21" height="16" viewBox="0 0 21 16"><path d="M5 0 H21 V16 H5 V11 L1 8 L5 4 Z" fill="#4a86f2"/></svg>
<div class="t" style="left:338.5px;top:894.95px;font-size:14px;line-height:18px;color:#0b74c4;letter-spacing:-0.22px;">Early Course Feedback</div>
<div class="t" style="left:338.5px;top:913.85px;font-size:14px;line-height:18px;color:#000;letter-spacing:-0.2px;">Course Feedback</div>
<div class="t" style="left:771.5px;top:904.25px;font-size:14px;line-height:18px;color:#000;letter-spacing:0px;">Sep 14 by 11:59pm</div>
<div class="t" style="left:942.4px;top:904.25px;font-size:14px;line-height:18px;color:#000;letter-spacing:0px;">Sep 9 at 7:24pm</div>
<div class="t" style="left:932px;width:600px;text-align:center;top:904.25px;font-size:14px;line-height:18px;color:#000;letter-spacing:0px;">5 / 5</div>
<div class="r" style="left:324px;top:946.8px;width:1250px;height:1px;background:#e4e7e9;"></div>
<div class="t" style="left:338.5px;top:960.25px;font-size:14px;line-height:18px;color:#0b74c4;letter-spacing:-0.22px;">Ch3 DA: Political Reform</div>
<div class="t" style="left:338.5px;top:979.15px;font-size:14px;line-height:18px;color:#000;letter-spacing:-0.2px;">Essay Review</div>
<div class="t" style="left:771.5px;top:969.55px;font-size:14px;line-height:18px;color:#000;letter-spacing:0px;">Sep 21 by 11:59pm</div>
<div class="t" style="left:942.4px;top:969.55px;font-size:14px;line-height:18px;color:#000;letter-spacing:0px;">Sep 20 at 11:20am</div>
<div class="t" style="left:932px;width:600px;text-align:center;top:969.55px;font-size:14px;line-height:18px;color:#000;letter-spacing:0px;">30 / 30</div>
<div class="r" style="left:324px;top:1012.0999999999999px;width:1250px;height:1px;background:#e4e7e9;"></div>
<div class="r" style="left:1464px;top:966.0px;width:40px;height:26px;background:#f2f4f4;border:1px solid #e6e8ea;border-radius:3px;box-sizing:border-box;"></div>
<svg class="r" style="left:1469px;top:971.5px;" width="19" height="17" viewBox="0 0 19 17"><g fill="none" stroke="#4a4a4a" stroke-width="1.05" stroke-linejoin="miter"><path d="M7.5 3.7 V1.5 H17 V8.9 L15.5 12.6 L12 8.9"/><path d="M1.5 5.4 H11.4 V12.8 H7.5 L4.5 16 V12.8 H1.5 Z" fill="#fff"/><path d="M4.2 8.4 H8.8 M4.2 10.3 H6.7" stroke="#777"/></g></svg>
<div class="t" style="left:1490px;top:969.65px;font-size:14px;line-height:18px;color:#2d3b45;letter-spacing:-0.2px;">4</div>
<svg class="r" style="left:1507px;top:972.5px;" width="21" height="16" viewBox="0 0 21 16"><path d="M5 0 H21 V16 H5 V11 L1 8 L5 4 Z" fill="#4a86f2"/></svg>
<div class="t" style="left:338.5px;top:1025.55px;font-size:14px;line-height:18px;color:#0b74c4;letter-spacing:-0.22px;">Ch 4 DB: Benefits</div>
<div class="t" style="left:338.5px;top:1044.45px;font-size:14px;line-height:18px;color:#000;letter-spacing:-0.2px;">Document Analysis &amp; Big Picture Essays</div>
<div class="t" style="left:771.5px;top:1034.85px;font-size:14px;line-height:18px;color:#000;letter-spacing:0px;">Sep 28 by 11:59pm</div>
<div class="t" style="left:942.4px;top:1034.85px;font-size:14px;line-height:18px;color:#000;letter-spacing:0px;">Sep 25 at 4:10pm</div>
<div class="t" style="left:932px;width:600px;text-align:center;top:1034.85px;font-size:14px;line-height:18px;color:#000;letter-spacing:0px;">20 / 20</div>
<div class="r" style="left:324px;top:1077.4px;width:1250px;height:1px;background:#e4e7e9;"></div>
<div class="t" style="left:1646px;top:219.46px;font-size:16px;line-height:20px;color:#000;letter-spacing:-0.1px;">Total: 80.09%</div>
<div class="r" style="left:1646px;top:246px;width:240px;height:61px;background:#f2f4f4;border:1px solid #e4e7e9;border-radius:3px;box-sizing:border-box;"></div>
<svg class="r" style="left:1658px;top:256px;" width="20" height="19" viewBox="0 0 20 19"><g fill="none" stroke="#3d4b55" stroke-width="1.2"><path d="M3 6.5 H9.8 M6.5 3.2 V8.7 M6.5 11.1 V16.5 H16.6 V10.1 M11.1 6.5 H15.8"/><path d="M9.3 9.3 L12.5 12.2 L18.7 6.3" stroke-width="1.4"/></g></svg>
<div class="t" style="left:1681.2px;top:255.46px;font-size:16px;line-height:20px;color:#2d3b45;letter-spacing:-0.1px;">Show Saved "What-If"</div>
<div class="t" style="left:1661.4px;top:277.26px;font-size:16px;line-height:20px;color:#2d3b45;letter-spacing:-0.1px;">Scores</div>
<div class="r" style="left:1646px;top:318px;width:143px;height:40px;background:#f2f4f4;border:1px solid #e4e7e9;border-radius:3px;box-sizing:border-box;"></div>
<div class="t" style="left:1661.4px;top:327.66px;font-size:16px;line-height:20px;color:#2d3b45;letter-spacing:-0.2px;">Show All Details</div>
<div class="t" style="left:1646px;top:365.46px;font-size:16px;line-height:20px;color:#000;font-weight:700;letter-spacing:-0.75px;">Course assignments are not</div>
<div class="t" style="left:1646px;top:389.06px;font-size:16px;line-height:20px;color:#000;font-weight:700;letter-spacing:-0.75px;">weighted.</div>
<div class="r" style="left:1646px;top:418px;width:240px;height:1px;background:#e4e7e9;"></div>
<div class="r" style="left:1646px;top:430px;width:16px;height:16px;background:#000;border-radius:3px;"></div>
<svg class="r" style="left:1648px;top:432px;" width="12" height="12" viewBox="0 0 12 12"><path d="M2.2 6.2 L5 9 L10 3.2" fill="none" stroke="#fff" stroke-width="2"/></svg>
<div class="t" style="left:1668px;top:428.46px;font-size:16px;line-height:20px;color:#000;letter-spacing:-0.23px;">Calculate based only on</div>
<div class="t" style="left:1668px;top:449.36px;font-size:16px;line-height:20px;color:#000;letter-spacing:-0.23px;">graded assignments</div>
<div class="t" style="left:1646px;top:482.46px;font-size:16px;line-height:20px;color:#000;letter-spacing:-0.15px;">You can view your grades based</div>
<div class="t" style="left:1646px;top:506.51px;font-size:16px;line-height:20px;color:#000;letter-spacing:-0.15px;">on What-If scores so that you</div>
<div class="t" style="left:1646px;top:530.56px;font-size:16px;line-height:20px;color:#000;letter-spacing:-0.15px;">know how grades will be affected</div>
<div class="t" style="left:1646px;top:554.61px;font-size:16px;line-height:20px;color:#000;letter-spacing:-0.15px;">by upcoming or resubmitted</div>
<div class="t" style="left:1646px;top:578.66px;font-size:16px;line-height:20px;color:#000;letter-spacing:-0.15px;">assignments. You can test scores</div>
<div class="t" style="left:1646px;top:602.71px;font-size:16px;line-height:20px;color:#000;letter-spacing:-0.15px;">for an assignment that already</div>
<div class="t" style="left:1646px;top:626.76px;font-size:16px;line-height:20px;color:#000;letter-spacing:-0.15px;">includes a score, or an assignment</div>
<div class="t" style="left:1646px;top:650.81px;font-size:16px;line-height:20px;color:#000;letter-spacing:-0.15px;">that has yet to be graded.</div>
<div class="r" style="left:1060px;top:753px;width:191px;height:22px;background:#2d3b45;border-radius:4px;"></div>
<svg class="r" style="left:1236px;top:774px;" width="12" height="5" viewBox="0 0 12 5"><path d="M0 0 L6 4.5 L12 0Z" fill="#2d3b45"/></svg>
<div class="t" style="left:1067.5px;top:754.15px;font-size:14px;line-height:18px;color:#f5f5f5;font-weight:700;letter-spacing:-0.55px;">Click to test a different score</div>
<div class="r" style="left:0px;top:1032px;width:1919px;height:47px;background:#192823;"></div>
<svg class="r" style="left:19px;top:1044px;" width="22" height="24" viewBox="0 0 22 24"><path d="M1 3 H9 V5 H7 V8 H6 V5 H4 V7 H3 V5 H1Z" fill="#a7d7f5"/><rect x="10.5" y="3" width="4" height="15" rx="2" fill="#4aa7e8" stroke="#dff1ff" stroke-width="1"/><circle cx="12.5" cy="19" r="4" fill="#2b6fd6" stroke="#dff1ff" stroke-width="1.5"/></svg>
<div class="r" style="left:30px;top:1038px;width:16px;height:16px;background:#f47c8a;border-radius:8px;"></div>
<div class="t" style="left:-262px;width:600px;text-align:center;top:1039.19px;font-size:11px;line-height:14px;color:#111;">3</div>
<div class="t" style="left:50.8px;top:1039.67px;font-size:12.5px;line-height:16px;color:#f0f0f0;letter-spacing:-0.1px;-webkit-text-stroke:0.25px #f0f0f0;">Cold weather</div>
<div class="t" style="left:50.8px;top:1055.37px;font-size:12.5px;line-height:16px;color:#cfd3d4;letter-spacing:-0.1px;">Now</div>
<svg class="r" style="left:748px;top:1045px;" width="24" height="23" viewBox="0 0 24 23"><defs><linearGradient id="wg" x1="0" y1="0" x2="1" y2="1"><stop offset="0" stop-color="#6fe0ff"/><stop offset="1" stop-color="#0f8fe0"/></linearGradient></defs><rect x="0" y="0" width="11.3" height="11" fill="url(#wg)"/><rect x="12.7" y="0" width="11.3" height="11" fill="url(#wg)"/><rect x="0" y="12.2" width="11.3" height="11" fill="url(#wg)"/><rect x="12.7" y="12.2" width="11.3" height="11" fill="url(#wg)"/></svg>
<div class="r" style="left:785px;top:1040px;width:220px;height:32px;background:#33443f;border-radius:16px;box-shadow:inset 0 0 0 1px #405049;"></div>
<svg class="r" style="left:796px;top:1046px;" width="20" height="20" viewBox="0 0 20 20"><circle cx="8" cy="8" r="6" fill="none" stroke="#e8e8e8" stroke-width="1.8"/><path d="M12.3 12.3 L17.5 17.5" stroke="#e8e8e8" stroke-width="1.9"/></svg>
<div class="t" style="left:822.3px;top:1047.65px;font-size:14px;line-height:18px;color:#d2d6d5;letter-spacing:-0.3px;">Search</div>
<svg class="r" style="left:952px;top:1043px;" width="53" height="27" viewBox="0 0 53 27"><ellipse cx="26" cy="15" rx="25" ry="11" fill="#f0d9a0"/><circle cx="18" cy="8" r="5.5" fill="#fff5d0" stroke="#7a5a2a" stroke-width="1.2"/><path d="M18 5 V8 L20 9" stroke="#5a3a1a" stroke-width="1"/><rect x="34" y="5" width="10" height="18" rx="1" fill="#e2562e"/><rect x="26" y="12" width="9" height="13" fill="#3a9ab8"/><rect x="4" y="16" width="12" height="9" fill="#8dbb3a"/></svg>
<svg class="r" style="left:1017px;top:1044px;" width="25" height="23" viewBox="0 0 25 23"><rect x="0" y="8" width="16" height="15" rx="2" fill="#6c6f70"/><rect x="8" y="0" width="17" height="16" rx="2" fill="#f4f4f4"/><rect x="8" y="8" width="8" height="8" fill="#a9abac"/></svg>
<svg class="r" style="left:1060px;top:1044px;" width="25" height="24" viewBox="0 0 25 24"><path d="M0 2 Q0 0 2 0 H9 L11 2.5 H23 Q25 2.5 25 4.5 V22 Q25 24 23 24 H2 Q0 24 0 22Z" fill="#f5c542"/><rect x="0" y="6" width="25" height="18" rx="2" fill="#ffd75a"/><rect x="6" y="16" width="13" height="5" rx="1" fill="#1a78d8"/></svg>
<div class="r" style="left:1070px;top:1072px;width:6px;height:3px;background:#9aa0a0;border-radius:2px;"></div>
<div class="r" style="left:1097px;top:1036px;width:40px;height:39px;background:#243631;border-radius:4px;box-shadow:inset 0 0 0 1px #2f413b;"></div>
<svg class="r" style="left:1105px;top:1044px;" width="25" height="25" viewBox="0 0 25 25"><circle cx="12.5" cy="12.5" r="12" fill="#db4437"/><path d="M12.5 12.5 L1.6 7.2 A12 12 0 0 0 8 23.7Z" fill="#0f9d58"/><path d="M12.5 12.5 L8 23.7 A12 12 0 0 0 24.5 12.5 Z" fill="#ffcd40"/><path d="M12.5 0.5 A12 12 0 0 0 1.6 7.2 L12.5 12.5 Z" fill="#db4437"/><circle cx="12.5" cy="12.5" r="5.6" fill="#fff"/><circle cx="12.5" cy="12.5" r="4.4" fill="#1a73e8"/></svg>
<svg class="r" style="left:1119px;top:1036px;" width="15" height="15" viewBox="0 0 15 15"><circle cx="7.5" cy="7.5" r="7" fill="#c8a060"/><ellipse cx="7.5" cy="8" rx="3.5" ry="4" fill="#e8c0a0"/><path d="M3 3 L11 2 L10 6 L4 6Z" fill="#f0e070"/></svg>
<div class="r" style="left:1108px;top:1071px;width:18px;height:3px;background:#4cc2ff;border-radius:2px;"></div>
<svg class="r" style="left:1149px;top:1044px;" width="24" height="24" viewBox="0 0 24 24"><rect x="0" y="0" width="24" height="24" fill="#bf0000"/><rect x="1" y="1" width="22" height="22" fill="#b41a1a" stroke="#8e0000" stroke-width="1" stroke-dasharray="2 1"/><text x="12" y="18" text-anchor="middle" font-family="Liberation Sans" font-weight="700" font-style="italic" font-size="16" fill="#fff">Fz</text></svg>
<div class="r" style="left:1158px;top:1072px;width:6px;height:3px;background:#9aa0a0;border-radius:2px;"></div>
<div class="t" style="right:18.59999999999991px;top:1041.84px;font-size:12px;line-height:15px;color:#eef0f0;text-align:right;">12:06 AM</div>
<div class="t" style="right:18.59999999999991px;top:1057.34px;font-size:12px;line-height:15px;color:#eef0f0;text-align:right;">12/2/2025</div>
</body></html>
